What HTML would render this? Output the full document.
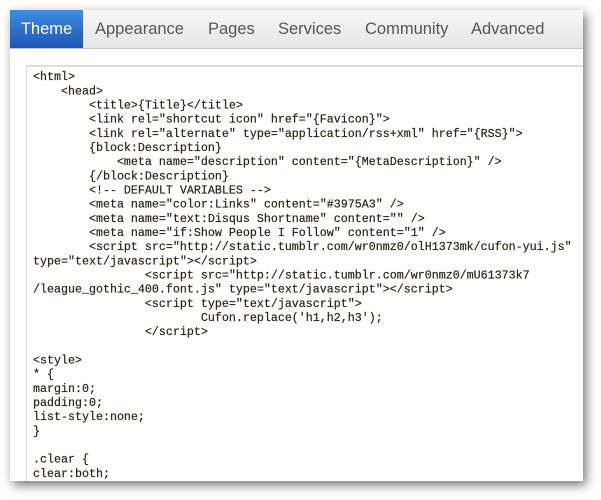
<!DOCTYPE html>
<html><head><style>
body{margin:0;width:601px;height:500px;background:#fff;position:relative;overflow:hidden;font-family:"Liberation Sans",sans-serif}
.win{position:absolute;left:10px;top:10px;width:573px;height:471px;background:#fff;box-shadow:3px 4px 10px rgba(0,0,0,.55);overflow:hidden}
.tabs{position:relative;height:38px;background:linear-gradient(#f8f8f8,#e6e6e6);border-bottom:1px solid #c8c8c8;font-size:16.5px;color:#555}
.tabs div{position:absolute;top:0;line-height:38px}
.tabs .on{left:0;width:73px;background:linear-gradient(#3c8ee0,#1e56b8);color:#fff;text-align:center}
.code{position:absolute;left:16px;top:55px;right:-5px;bottom:-5px;border:1px solid #ddd;border-top:2px solid #ddd}
pre{margin:0;padding:3px 0 0 6px;font-family:"Liberation Mono",monospace;font-size:11.67px;line-height:14px;color:#2a2418;-webkit-text-stroke:0.2px #2a2418;transform:scaleY(1.012);transform-origin:0 0}
</style></head><body>
<div class="win">
<div class="tabs"><div class="on">Theme</div><div style="left:85px">Appearance</div><div style="left:198px">Pages</div><div style="left:268px">Services</div><div style="left:355px">Community</div><div style="left:461px">Advanced</div></div>
<div class="code"><pre>&lt;html&gt;
    &lt;head&gt;
        &lt;title&gt;{Title}&lt;/title&gt;
        &lt;link rel="shortcut icon" href="{Favicon}"&gt;
        &lt;link rel="alternate" type="application/rss+xml" href="{RSS}"&gt;
        {block:Description}
            &lt;meta name="description" content="{MetaDescription}" /&gt;
        {/block:Description}
        &lt;!-- DEFAULT VARIABLES --&gt;
        &lt;meta name="color:Links" content="#3975A3" /&gt;
        &lt;meta name="text:Disqus Shortname" content="" /&gt;
        &lt;meta name="if:Show People I Follow" content="1" /&gt;
        &lt;script src="http://static.tumblr.com/wr0nmz0/olH1373mk/cufon-yui.js"
type="text/javascript"&gt;&lt;/script&gt;
                &lt;script src="http://static.tumblr.com/wr0nmz0/mU61373k7
/league_gothic_400.font.js" type="text/javascript"&gt;&lt;/script&gt;
                &lt;script type="text/javascript"&gt;
                        Cufon.replace('h1,h2,h3');
                &lt;/script&gt;

&lt;style&gt;
* {
margin:0;
padding:0;
list-style:none;
}

.clear {
clear:both;
}</pre></div>
</div>
</body></html>
